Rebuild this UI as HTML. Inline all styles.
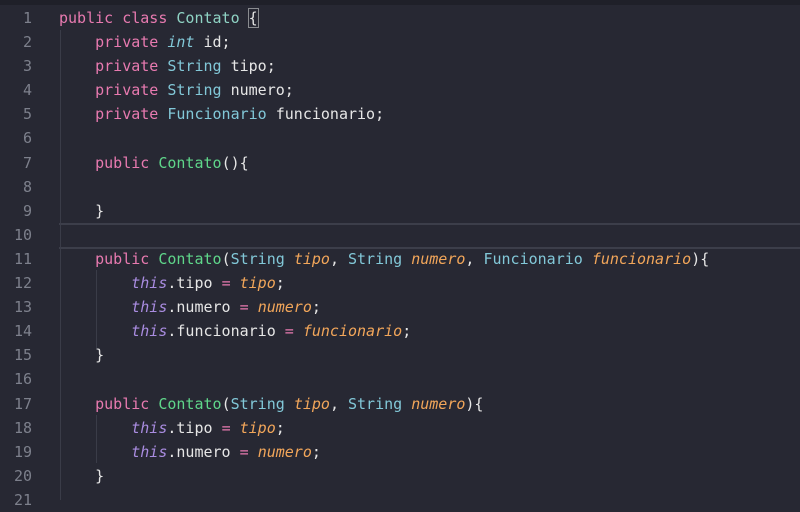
<!DOCTYPE html>
<html><head><meta charset="utf-8"><style>
html,body{margin:0;padding:0;width:800px;height:500px;overflow:hidden;background:#272833;}
.top{position:absolute;left:0;top:0;width:800px;height:5px;background:#1f2029;}
.code{position:absolute;left:0;top:6px;font-family:"DejaVu Sans Mono","Liberation Mono",monospace;font-size:15px;}
.l{height:24.1px;line-height:24.1px;white-space:pre;position:relative;color:#e6e6e6;}
.n{display:inline-block;width:32px;text-align:right;color:#7d808c;margin-right:27px;}
.k{color:#e87ab0}.t{color:#82c8d8}.c{color:#8fd3c4}.f{color:#5fd68a}.p{color:#f2a65a;font-style:italic}.th{color:#a98ce0;font-style:italic}.ti{color:#82c8d8;font-style:italic}
.hl{position:absolute;left:59px;top:223px;width:741px;height:22px;border-top:2px solid #3c3e4a;border-bottom:2px solid #3c3e4a;}
.g{position:absolute;width:1px;background:#3a3c48;}
.br{outline:1px solid #8a8c90;}
</style></head><body>
<div class="top"></div>
<div class="hl"></div>
<div class="g" style="left:60px;top:30px;height:470px"></div>
<div class="g" style="left:96px;top:270px;height:80px"></div>
<div class="g" style="left:96px;top:415px;height:48px"></div>
<div class="code">
<div class="l"><span class="n">1</span><span class="k">public class</span> <span class="c">Contato</span> <span class="br">{</span></div>
<div class="l"><span class="n">2</span>    <span class="k">private</span> <span class="ti">int</span> id;</div>
<div class="l"><span class="n">3</span>    <span class="k">private</span> <span class="t">String</span> tipo;</div>
<div class="l"><span class="n">4</span>    <span class="k">private</span> <span class="t">String</span> numero;</div>
<div class="l"><span class="n">5</span>    <span class="k">private</span> <span class="t">Funcionario</span> funcionario;</div>
<div class="l"><span class="n">6</span></div>
<div class="l"><span class="n">7</span>    <span class="k">public</span> <span class="f">Contato</span>(){</div>
<div class="l"><span class="n">8</span></div>
<div class="l"><span class="n">9</span>    }</div>
<div class="l"><span class="n">10</span></div>
<div class="l"><span class="n">11</span>    <span class="k">public</span> <span class="f">Contato</span>(<span class="t">String</span> <span class="p">tipo</span>, <span class="t">String</span> <span class="p">numero</span>, <span class="t">Funcionario</span> <span class="p">funcionario</span>){</div>
<div class="l"><span class="n">12</span>        <span class="th">this</span>.tipo <span class="k">=</span> <span class="p">tipo</span>;</div>
<div class="l"><span class="n">13</span>        <span class="th">this</span>.numero <span class="k">=</span> <span class="p">numero</span>;</div>
<div class="l"><span class="n">14</span>        <span class="th">this</span>.funcionario <span class="k">=</span> <span class="p">funcionario</span>;</div>
<div class="l"><span class="n">15</span>    }</div>
<div class="l"><span class="n">16</span></div>
<div class="l"><span class="n">17</span>    <span class="k">public</span> <span class="f">Contato</span>(<span class="t">String</span> <span class="p">tipo</span>, <span class="t">String</span> <span class="p">numero</span>){</div>
<div class="l"><span class="n">18</span>        <span class="th">this</span>.tipo <span class="k">=</span> <span class="p">tipo</span>;</div>
<div class="l"><span class="n">19</span>        <span class="th">this</span>.numero <span class="k">=</span> <span class="p">numero</span>;</div>
<div class="l"><span class="n">20</span>    }</div>
<div class="l"><span class="n">21</span></div>
</div>
</body></html>
